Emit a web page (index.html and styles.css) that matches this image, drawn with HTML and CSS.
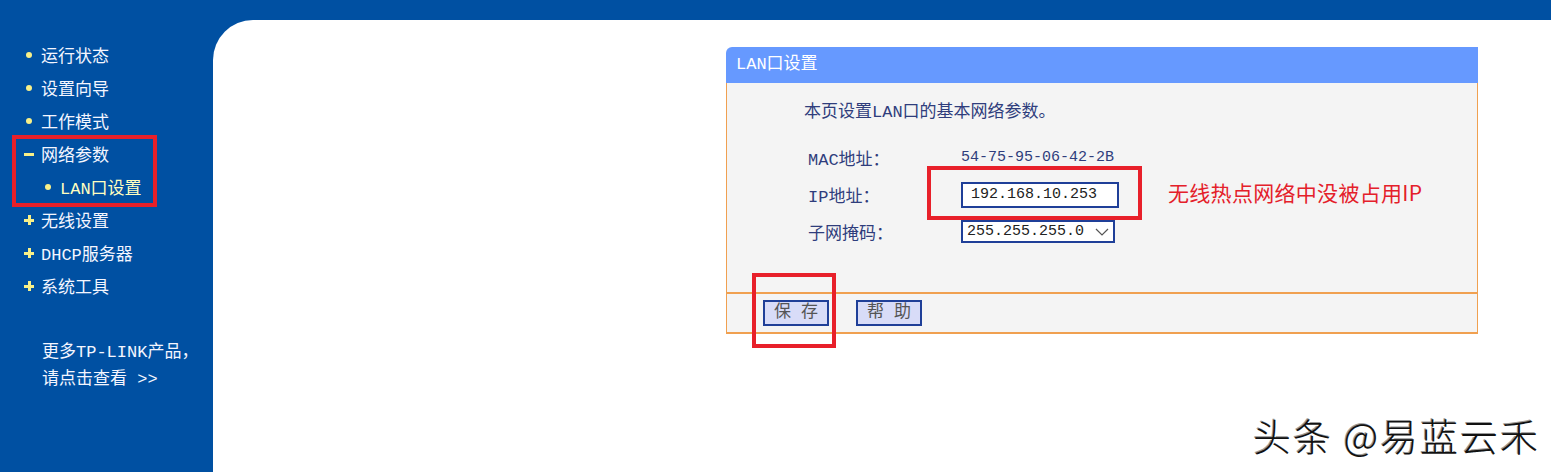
FILE: index.html
```html
<!DOCTYPE html>
<html lang="zh-CN">
<head>
  <meta charset="UTF-8" />
  <title>LAN口设置</title>
  <link rel="stylesheet" href="styles.css">
</head>
<body>
  <div class="layout">
    <!-- Left menu -->
    <nav class="sidebar">
      <div class="item"><span class="dot"></span>运行状态</div>
      <div class="item"><span class="dot"></span>设置向导</div>
      <div class="item"><span class="dot"></span>工作模式</div>
      <div class="group">
        <div class="item"><span class="minus"></span>网络参数</div>
        <div class="item sub"><span class="dot"></span>LAN口设置</div>
      </div>
      <div class="item"><span class="plus"></span>无线设置</div>
      <div class="item"><span class="plus"></span>DHCP服务器</div>
      <div class="item"><span class="plus"></span>系统工具</div>

      <div class="more">
        <div>更多TP-LINK产品，</div>
        <div>请点击查看 &gt;&gt;</div>
      </div>
    </nav>

    <!-- Main content -->
    <main class="main">
      <section class="panel">
        <div class="panel-head">LAN口设置</div>
        <div class="panel-body">
          <p class="intro">本页设置LAN口的基本网络参数。</p>
          <div class="form">
            <div class="label">MAC地址：</div>
            <div class="value">54-75-95-06-42-2B</div>
            <div class="label">IP地址：</div>
            <div class="value"><span class="input">192.168.10.253</span></div>
            <div class="label">子网掩码：</div>
            <div class="value">
              <span class="select">255.255.255.0
                <svg class="chev" width="14" height="8" viewBox="0 0 14 8"><path d="M1 1 L7 7 L13 1" fill="none" stroke="#555" stroke-width="1.2"/></svg>
              </span>
            </div>
          </div>
        </div>
        <div class="panel-foot">
          <button class="btn">保 存</button>
          <button class="btn">帮 助</button>
        </div>

        <!-- red annotations -->
        <div class="mark mark-ip"></div>
        <div class="mark mark-save"></div>
        <div class="note">无线热点网络中没被占用IP</div>
      </section>

      <div class="watermark">头条 @易蓝云禾</div>
    </main>
  </div>
</body>
</html>
```

FILE: styles.css
```css
html, body {
  margin: 0;
  padding: 0;
  height: 100%;
}

body {
  background-color: #0050a2;
  font-family: "Liberation Mono", "Noto Sans CJK SC", monospace;
  font-size: 17px;
  overflow: hidden;
}

.layout {
  display: flex;
  padding-top: 20px;
  height: 452px;
}

/* Sidebar menu */
.sidebar {
  width: 213px;
  flex: none;
  padding-top: 18px;
  color: #f4f6ff;
}

.item {
  display: flex;
  align-items: center;
  height: 33px;
  padding-left: 24px;
}

.item.sub {
  padding-left: 43px;
  color: #ffffc0;
}

.dot, .plus, .minus {
  position: relative;
  width: 10px;
  height: 10px;
  margin-right: 7px;
  flex: none;
}

.dot::before {
  content: "";
  position: absolute;
  left: 2px;
  top: 2px;
  width: 6px;
  height: 6px;
  border-radius: 50%;
  background-color: #f8f088;
}

.plus::before, .minus::before {
  content: "";
  position: absolute;
  left: 0;
  top: 4px;
  width: 10px;
  height: 3px;
  background-color: #f8f088;
}

.plus::after {
  content: "";
  position: absolute;
  left: 3.5px;
  top: 0;
  width: 3px;
  height: 10px;
  background-color: #f8f088;
}

.group {
  position: relative;
}

.group::after {
  content: "";
  position: absolute;
  left: 12px;
  top: -2px;
  width: 137px;
  height: 64px;
  border: 4px solid #e8202a;
}

.more {
  margin-top: 37px;
  padding-left: 42px;
  line-height: 27px;
}

/* Main area */
.main {
  position: relative;
  flex: 1;
  background-color: #fff;
  border-top-left-radius: 40px;
  padding: 27px 0 0 513px;
}

.panel {
  position: relative;
  width: 752px;
  color: #2f3d7c;
}

.panel-head {
  height: 36px;
  line-height: 36px;
  padding-left: 10px;
  background-color: #6699ff;
  color: #fff;
  border-top-left-radius: 6px;
}

.panel-body {
  background-color: #f4f4f4;
  border-left: 1px solid #f0a050;
  border-right: 1px solid #f0a050;
  padding: 18px 0 42px 0;
}

.intro {
  margin: 0 0 14px 77px;
  line-height: 24px;
}

.form {
  display: grid;
  grid-template-columns: 153px auto;
  grid-auto-rows: 37px;
  align-items: center;
  padding-left: 81px;
}

.value {
  display: flex;
  align-items: center;
  font-size: 15px;
}

.input {
  display: inline-block;
  width: 146px;
  height: 22px;
  line-height: 22px;
  padding-left: 8px;
  background-color: #fff;
  border: 2px solid #1f3f98;
  color: #222;
}

.select {
  display: inline-flex;
  align-items: center;
  justify-content: space-between;
  width: 146px;
  height: 19px;
  line-height: 19px;
  padding: 0 0 0 4px;
  background-color: #fff;
  border: 2px solid #1f3f98;
  color: #222;
}

.chev {
  margin-right: 4px;
}

.panel-foot {
  display: flex;
  gap: 27px;
  height: 38px;
  align-items: center;
  padding-left: 36px;
  background-color: #f4f4f4;
  border: 1px solid #f0a050;
  border-top-width: 2px;
  border-bottom-width: 2px;
}

.btn {
  width: 66px;
  height: 26px;
  padding: 0;
  background-color: #d8dcf8;
  border: 2px solid #1f3f98;
  color: #555;
  font-family: "Liberation Mono", "Noto Sans CJK SC", monospace;
  font-size: 17px;
  line-height: 20px;
}

/* Red annotations */
.mark {
  position: absolute;
  border: 4px solid #e8202a;
}

.mark-ip {
  left: 201px;
  top: 119px;
  width: 207px;
  height: 46px;
}

.mark-save {
  left: 26px;
  top: 226px;
  width: 76px;
  height: 67px;
}

.note {
  position: absolute;
  left: 442px;
  top: 131px;
  color: #e4202a;
  font-family: "Noto Sans CJK SC", sans-serif;
  font-size: 21px;
  line-height: 28px;
  letter-spacing: 0.3px;
}

.watermark {
  position: absolute;
  left: 1040px;
  top: 387px;
  font-family: "Noto Sans CJK SC", sans-serif;
  font-size: 38px;
  font-weight: 300;
  letter-spacing: 2px;
  color: #111;
  text-shadow: 1px 1px 0 #fff, -1px -1px 0 #999;
}
```
